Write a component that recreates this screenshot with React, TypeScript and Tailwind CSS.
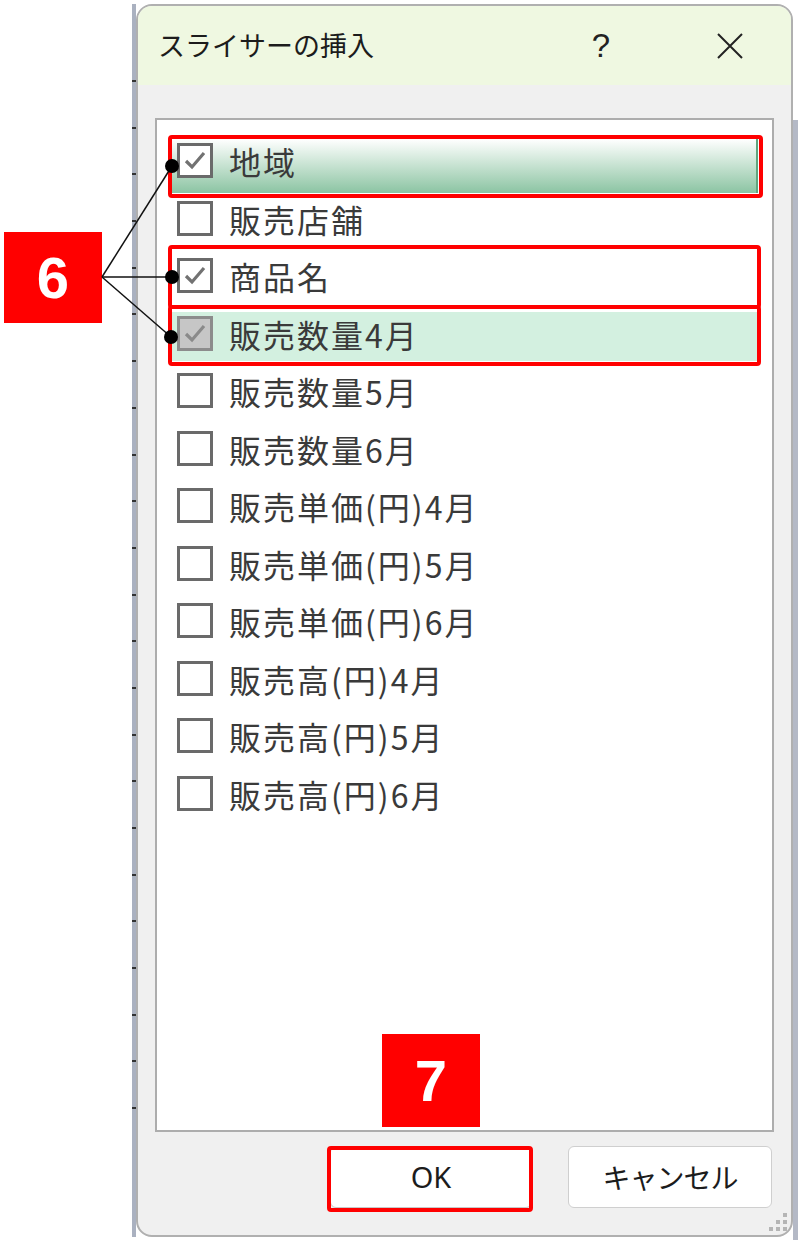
import React from "react";

type Item = {
  label: string;
  checked?: boolean;
  grayed?: boolean;
  look?: "focus" | "light";
};

const items: Item[] = [
  { label: "地域", checked: true, look: "focus" },
  { label: "販売店舗" },
  { label: "商品名", checked: true },
  { label: "販売数量4月", checked: true, grayed: true, look: "light" },
  { label: "販売数量5月" },
  { label: "販売数量6月" },
  { label: "販売単価(円)4月" },
  { label: "販売単価(円)5月" },
  { label: "販売単価(円)6月" },
  { label: "販売高(円)4月" },
  { label: "販売高(円)5月" },
  { label: "販売高(円)6月" },
];

const font = "font-['Noto_Sans_CJK_JP','Noto_Sans',sans-serif]";

function CheckBox({ checked, grayed }: { checked?: boolean; grayed?: boolean }) {
  return (
    <div
      className={
        grayed
          ? "w-[36px] h-[35px] shrink-0 border-[3px] border-[#8c8c8c] bg-[#c6c6c6]"
          : "w-[36px] h-[35px] shrink-0 border-[3px] border-[#6a6a6a] bg-white"
      }
    >
      {checked && (
        <svg width="30" height="29" viewBox="0 0 30 29">
          <path
            d="M6 15 L12 21 L24 7"
            fill="none"
            stroke={grayed ? "#8a8a8a" : "#727272"}
            strokeWidth="3.2"
          />
        </svg>
      )}
    </div>
  );
}

function Row({ item }: { item: Item }) {
  let bg = "h-[54px]";
  if (item.look === "focus") {
    bg = "h-[54px] bg-gradient-to-b from-white to-[#8bc4a3] border-r-2 border-[#5fa57d]";
  } else if (item.look === "light") {
    bg = "h-[49px] bg-[#d3f0e0]";
  }
  return (
    <div className="h-[57.5px] pt-[3px]">
      <div className={`flex items-start pl-[5px] pt-[4px] ${bg}`}>
        <CheckBox checked={item.checked} grayed={item.grayed} />
        <span className="ml-[16px] text-[32px] leading-[36px] tracking-[2px] text-[#3a3a3a] whitespace-nowrap">
          {item.label}
        </span>
      </div>
    </div>
  );
}

function Strip() {
  return (
    <div className="w-[4px] h-[1233px] bg-[#aab1c0] flex flex-col pt-[76px]">
      {Array.from({ length: 23 }).map((_, i) => (
        <div key={i} className="h-[46.7px] border-t-2 border-[#333] shrink-0" />
      ))}
    </div>
  );
}

export default function App() {
  return (
    <div className={`relative w-[798px] h-[1240px] bg-white overflow-hidden ${font}`}>
      <div className="flex pt-[4px] pl-[132px]">
        <Strip />
        <div className="relative w-[657px] h-[1233px] border-2 border-[#b0b0b0] rounded-[16px] overflow-hidden bg-[#f0f0f0] flex flex-col">
          <div className="h-[79px] shrink-0 bg-[#eff8e1] flex items-center pl-[20px] pr-[47px]">
            <span className="text-[27px] text-[#1c1c1c]">スライサーの挿入</span>
            <div className="flex-1" />
            <span className="text-[33px] leading-none text-[#222] font-['Liberation_Sans',sans-serif] w-[30px] text-center">
              ?
            </span>
            <div className="w-[100px]" />
            <svg width="28" height="28" viewBox="0 0 28 28">
              <path d="M2 2 L26 26 M26 2 L2 26" stroke="#222" strokeWidth="2" />
            </svg>
          </div>

          <div className="flex-1 px-[17px] pt-[33px] flex flex-col">
            <div className="h-[1014px] border-2 border-[#adadad] bg-white pt-[16px] pl-[15px] pr-[14px]">
              {items.map((it) => (
                <Row key={it.label} item={it} />
              ))}
            </div>

            <div className="mt-[14px] flex justify-end gap-[36px] pr-[2px]">
              <button className="w-[202px] h-[62px] bg-white border border-[#c8c8c8] rounded-[6px] text-[29px] text-[#1c1c1c] font-['Noto_Sans',sans-serif]">
                OK
              </button>
              <button className="w-[204px] h-[62px] bg-white border border-[#cfcfcf] rounded-[6px] text-[28px] text-[#1c1c1c] tracking-[-1px]">
                キャンセル
              </button>
            </div>
          </div>

          {/* resize grip */}
          <div className="absolute right-[4px] bottom-[4px] grid grid-cols-3 gap-[3px]">
            <span className="w-[4px] h-[4px]" />
            <span className="w-[4px] h-[4px]" />
            <span className="w-[4px] h-[4px] bg-[#b5b5b5]" />
            <span className="w-[4px] h-[4px]" />
            <span className="w-[4px] h-[4px] bg-[#b5b5b5]" />
            <span className="w-[4px] h-[4px] bg-[#b5b5b5]" />
            <span className="w-[4px] h-[4px] bg-[#b5b5b5]" />
            <span className="w-[4px] h-[4px] bg-[#b5b5b5]" />
            <span className="w-[4px] h-[4px] bg-[#b5b5b5]" />
          </div>
        </div>
        <div className="w-[5px] h-[1120px] mt-[116px] bg-[#b4b9c6]" />
      </div>

      {/* annotations */}
      <div className="absolute left-[168px] top-[135px] w-[595px] h-[63px] border-4 border-[#ff0000] rounded-[4px]" />
      <div className="absolute left-[168px] top-[245px] w-[593px] h-[64px] border-4 border-[#ff0000] rounded-[4px]" />
      <div className="absolute left-[168px] top-[305px] w-[593px] h-[61px] border-4 border-[#ff0000] rounded-[4px]" />
      <div className="absolute left-[327px] top-[1146px] w-[206px] h-[66px] border-4 border-[#ff0000] rounded-[4px]" />

      <div className="absolute left-[4px] top-[232px] w-[98px] h-[91px] bg-[#ff0000] flex items-center justify-center">
        <span className="text-white text-[58px] font-bold font-['Liberation_Sans',sans-serif] leading-none">6</span>
      </div>
      <div className="absolute left-[382px] top-[1034px] w-[98px] h-[93px] bg-[#ff0000] flex items-center justify-center">
        <span className="text-white text-[58px] font-bold font-['Liberation_Sans',sans-serif] leading-none">7</span>
      </div>

      <svg className="absolute left-0 top-0 pointer-events-none" width="798" height="1240">
        <g stroke="#111" strokeWidth="1.5">
          <line x1="102" y1="277" x2="172" y2="166" />
          <line x1="102" y1="277" x2="172" y2="277" />
          <line x1="102" y1="277" x2="171" y2="337" />
        </g>
        <circle cx="172" cy="166" r="7" fill="#000" />
        <circle cx="172" cy="277" r="7" fill="#000" />
        <circle cx="171" cy="337" r="7" fill="#000" />
      </svg>
    </div>
  );
}
